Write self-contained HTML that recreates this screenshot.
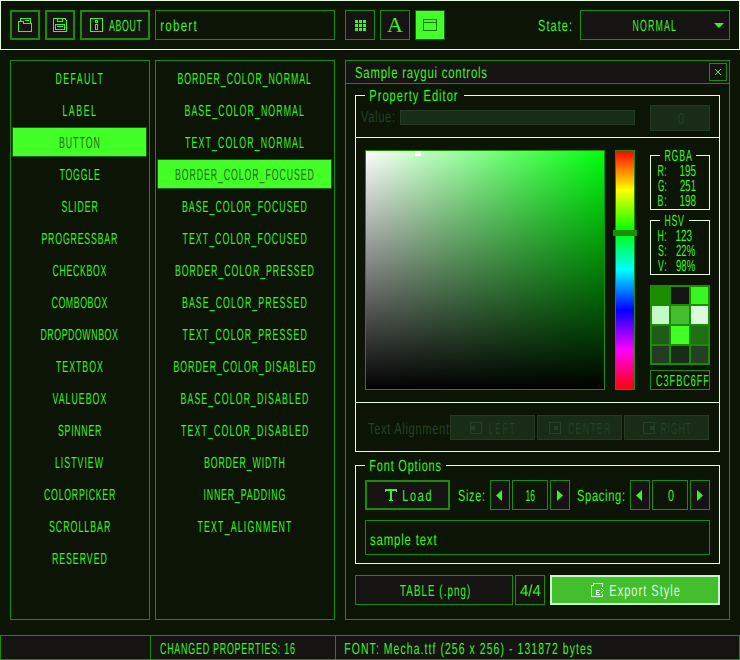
<!DOCTYPE html>
<html><head><meta charset="utf-8"><title>raygui style editor</title>
<style>
html,body{margin:0;padding:0;background:#0c1505;width:740px;height:660px;overflow:hidden;}
.r{position:absolute;box-sizing:border-box;}
.t{position:absolute;font:16px/16px "Liberation Sans",sans-serif;white-space:nowrap;transform-origin:0 0;}
</style></head><body>
<div class="r" style="left:0px;top:0px;width:740px;height:50px;background:#0c1505;border:1px solid #e6fce3;"></div>
<div class="r" style="left:10px;top:10px;width:30px;height:30px;background:#161313;border:2px solid #1c8d00;"></div>
<div class="r" style="left:45px;top:10px;width:30px;height:30px;background:#161313;border:2px solid #1c8d00;"></div>
<div class="r" style="left:80px;top:10px;width:70px;height:30px;background:#161313;border:2px solid #1c8d00;"></div>
<div class="r" style="left:155px;top:10px;width:180px;height:30px;background:#0c1505;border:1px solid #1c8d00;"></div>
<div class="r" style="left:345px;top:10px;width:30px;height:30px;background:#161313;border:1px solid #1c8d00;"></div>
<div class="r" style="left:380px;top:10px;width:30px;height:30px;background:#161313;border:1px solid #1c8d00;"></div>
<div class="r" style="left:415px;top:10px;width:30px;height:30px;background:#43ff28;border:1px solid #1f5b19;"></div>
<div class="r" style="left:580px;top:10px;width:150px;height:30px;background:#161313;border:1px solid #1c8d00;"></div>
<div class="r" style="left:18px;top:21px;width:1px;height:11px;background:#38f620;"></div>
<div class="r" style="left:18px;top:31px;width:14px;height:1px;background:#38f620;"></div>
<div class="r" style="left:31px;top:23px;width:1px;height:9px;background:#38f620;"></div>
<div class="r" style="left:18px;top:21px;width:6px;height:1px;background:#38f620;"></div>
<div class="r" style="left:23px;top:21px;width:1px;height:3px;background:#38f620;"></div>
<div class="r" style="left:23px;top:23px;width:9px;height:1px;background:#38f620;"></div>
<div class="r" style="left:20px;top:18px;width:1px;height:4px;background:#38f620;"></div>
<div class="r" style="left:20px;top:18px;width:11px;height:1px;background:#38f620;"></div>
<div class="r" style="left:30px;top:18px;width:1px;height:6px;background:#38f620;"></div>
<div class="r" style="left:25px;top:20px;width:4px;height:1px;background:#38f620;"></div>
<div class="r" style="left:53px;top:18px;width:1px;height:14px;background:#38f620;"></div>
<div class="r" style="left:53px;top:31px;width:14px;height:1px;background:#38f620;"></div>
<div class="r" style="left:66px;top:20px;width:1px;height:12px;background:#38f620;"></div>
<div class="r" style="left:53px;top:18px;width:13px;height:1px;background:#38f620;"></div>
<div class="r" style="left:65px;top:19px;width:1px;height:1px;background:#38f620;"></div>
<div class="r" style="left:57px;top:18px;width:1px;height:4px;background:#38f620;"></div>
<div class="r" style="left:62px;top:18px;width:1px;height:4px;background:#38f620;"></div>
<div class="r" style="left:57px;top:21px;width:6px;height:1px;background:#38f620;"></div>
<div class="r" style="left:55px;top:24px;width:10px;height:1px;background:#38f620;"></div>
<div class="r" style="left:55px;top:29px;width:10px;height:1px;background:#38f620;"></div>
<div class="r" style="left:55px;top:24px;width:1px;height:6px;background:#38f620;"></div>
<div class="r" style="left:64px;top:24px;width:1px;height:6px;background:#38f620;"></div>
<div class="r" style="left:57px;top:26px;width:6px;height:1px;background:#38f620;"></div>
<div class="r" style="left:90px;top:18px;width:13px;height:1px;background:#38f620;"></div>
<div class="r" style="left:90px;top:31px;width:13px;height:1px;background:#38f620;"></div>
<div class="r" style="left:90px;top:18px;width:1px;height:14px;background:#38f620;"></div>
<div class="r" style="left:102px;top:18px;width:1px;height:14px;background:#38f620;"></div>
<div class="r" style="left:95px;top:20px;width:3px;height:1px;background:#38f620;"></div>
<div class="r" style="left:95px;top:22px;width:3px;height:1px;background:#38f620;"></div>
<div class="r" style="left:95px;top:20px;width:1px;height:3px;background:#38f620;"></div>
<div class="r" style="left:97px;top:20px;width:1px;height:3px;background:#38f620;"></div>
<div class="r" style="left:95px;top:24px;width:3px;height:1px;background:#38f620;"></div>
<div class="r" style="left:95px;top:29px;width:3px;height:1px;background:#38f620;"></div>
<div class="r" style="left:95px;top:24px;width:1px;height:6px;background:#38f620;"></div>
<div class="r" style="left:97px;top:24px;width:1px;height:6px;background:#38f620;"></div>
<div class="r" style="left:355px;top:20px;width:3px;height:3px;background:#38f620;"></div>
<div class="r" style="left:355px;top:24px;width:3px;height:3px;background:#38f620;"></div>
<div class="r" style="left:355px;top:28px;width:3px;height:3px;background:#38f620;"></div>
<div class="r" style="left:359px;top:20px;width:3px;height:3px;background:#38f620;"></div>
<div class="r" style="left:359px;top:24px;width:3px;height:3px;background:#38f620;"></div>
<div class="r" style="left:359px;top:28px;width:3px;height:3px;background:#38f620;"></div>
<div class="r" style="left:363px;top:20px;width:3px;height:3px;background:#38f620;"></div>
<div class="r" style="left:363px;top:24px;width:3px;height:3px;background:#38f620;"></div>
<div class="r" style="left:363px;top:28px;width:3px;height:3px;background:#38f620;"></div>
<div class="r" style="left:423px;top:19px;width:14px;height:1px;background:#1e6f15;"></div>
<div class="r" style="left:423px;top:30px;width:14px;height:1px;background:#1e6f15;"></div>
<div class="r" style="left:423px;top:19px;width:1px;height:12px;background:#1e6f15;"></div>
<div class="r" style="left:436px;top:19px;width:1px;height:12px;background:#1e6f15;"></div>
<div class="r" style="left:423px;top:22px;width:14px;height:1px;background:#1e6f15;"></div>
<div class="r" style="left:387px;top:15px;font:20px/20px 'Liberation Serif',serif;color:#38f620;transform:scaleX(1.1);transform-origin:0 0">A</div>
<div class="r" style="left:10px;top:60px;width:140px;height:560px;background:#0c1505;border:1px solid #1c8d00;"></div>
<div class="r" style="left:155px;top:60px;width:180px;height:560px;background:#0c1505;border:1px solid #1c8d00;"></div>
<div class="r" style="left:12px;top:127px;width:135px;height:30px;background:#43ff28;border:1px solid #1f5b19;"></div>
<div class="r" style="left:157px;top:159px;width:175px;height:30px;background:#43ff28;border:1px solid #1f5b19;"></div>
<div class="r" style="left:345px;top:60px;width:385px;height:560px;background:#0c1505;border:1px solid #1c8d00;"></div>
<div class="r" style="left:345px;top:60px;width:385px;height:24px;background:#161313;border:1px solid #1c8d00;"></div>
<div class="r" style="left:709px;top:63px;width:18px;height:18px;background:#161313;border:1px solid #1c8d00;"></div>
<div class="r" style="left:715px;top:69px;width:1px;height:1px;background:#38f620;"></div>
<div class="r" style="left:716px;top:70px;width:1px;height:1px;background:#38f620;"></div>
<div class="r" style="left:717px;top:71px;width:2px;height:2px;background:#38f620;"></div>
<div class="r" style="left:719px;top:73px;width:1px;height:1px;background:#38f620;"></div>
<div class="r" style="left:720px;top:74px;width:1px;height:1px;background:#38f620;"></div>
<div class="r" style="left:720px;top:69px;width:1px;height:1px;background:#38f620;"></div>
<div class="r" style="left:719px;top:70px;width:1px;height:1px;background:#38f620;"></div>
<div class="r" style="left:716px;top:73px;width:1px;height:1px;background:#38f620;"></div>
<div class="r" style="left:715px;top:74px;width:1px;height:1px;background:#38f620;"></div>
<div class="r" style="left:355px;top:95px;width:1px;height:357px;background:#e6fce3;"></div>
<div class="r" style="left:719px;top:95px;width:1px;height:357px;background:#e6fce3;"></div>
<div class="r" style="left:355px;top:451px;width:365px;height:1px;background:#e6fce3;"></div>
<div class="r" style="left:355px;top:95px;width:10px;height:1px;background:#e6fce3;"></div>
<div class="r" style="left:464px;top:95px;width:256px;height:1px;background:#e6fce3;"></div>
<div class="r" style="left:400px;top:110px;width:235px;height:15px;background:#182c18;border:1px solid #223b22;"></div>
<div class="r" style="left:650px;top:105px;width:60px;height:26px;background:#182c18;border:1px solid #223b22;"></div>
<div class="r" style="left:355px;top:137px;width:365px;height:1px;background:#e6fce3;"></div>
<div class="r" style="left:365px;top:150px;width:240px;height:240px;background:linear-gradient(to bottom,rgba(0,0,0,0),#000),linear-gradient(to right,#fff,#00ff0c);"></div>
<div class="r" style="left:415px;top:151px;width:6px;height:5px;background:#ffffff;"></div>
<div class="r" style="left:365px;top:150px;width:240px;height:240px;border:1px solid #1c8d00;"></div>
<div class="r" style="left:615px;top:150px;width:20px;height:240px;background:linear-gradient(#f00,#ff0 16.667%,#0f0 33.333%,#0ff 50%,#00f 66.667%,#f0f 83.333%,#f00);"></div>
<div class="r" style="left:615px;top:150px;width:20px;height:240px;border:1px solid #1c8d00;"></div>
<div class="r" style="left:613px;top:230px;width:24px;height:6px;background:#1c8d00;"></div>
<div class="r" style="left:650px;top:155px;width:1px;height:55px;background:#e6fce3;"></div>
<div class="r" style="left:709px;top:155px;width:1px;height:55px;background:#e6fce3;"></div>
<div class="r" style="left:650px;top:209px;width:60px;height:1px;background:#e6fce3;"></div>
<div class="r" style="left:650px;top:155px;width:10px;height:1px;background:#e6fce3;"></div>
<div class="r" style="left:696px;top:155px;width:14px;height:1px;background:#e6fce3;"></div>
<div class="r" style="left:650px;top:220px;width:1px;height:55px;background:#e6fce3;"></div>
<div class="r" style="left:709px;top:220px;width:1px;height:55px;background:#e6fce3;"></div>
<div class="r" style="left:650px;top:274px;width:60px;height:1px;background:#e6fce3;"></div>
<div class="r" style="left:650px;top:220px;width:10px;height:1px;background:#e6fce3;"></div>
<div class="r" style="left:689px;top:220px;width:21px;height:1px;background:#e6fce3;"></div>
<div class="r" style="left:650px;top:285px;width:60px;height:80px;background:#1c8d00;"></div>
<div class="r" style="left:652px;top:287px;width:17px;height:17px;background:#1c8d00;"></div>
<div class="r" style="left:671px;top:287px;width:18px;height:17px;background:#161313;"></div>
<div class="r" style="left:691px;top:287px;width:17px;height:17px;background:#38f620;"></div>
<div class="r" style="left:652px;top:306px;width:17px;height:18px;background:#c3fbc6;"></div>
<div class="r" style="left:671px;top:306px;width:18px;height:18px;background:#43bf2e;"></div>
<div class="r" style="left:691px;top:306px;width:17px;height:18px;background:#dcfadc;"></div>
<div class="r" style="left:652px;top:326px;width:17px;height:18px;background:#1f5b19;"></div>
<div class="r" style="left:671px;top:326px;width:18px;height:18px;background:#43ff28;"></div>
<div class="r" style="left:691px;top:326px;width:17px;height:18px;background:#1e6f15;"></div>
<div class="r" style="left:652px;top:346px;width:17px;height:17px;background:#223b22;"></div>
<div class="r" style="left:671px;top:346px;width:18px;height:17px;background:#182c18;"></div>
<div class="r" style="left:691px;top:346px;width:17px;height:17px;background:#244125;"></div>
<div class="r" style="left:650px;top:370px;width:60px;height:20px;background:#0c1505;border:1px solid #1c8d00;"></div>
<div class="r" style="left:355px;top:402px;width:365px;height:1px;background:#e6fce3;"></div>
<div class="r" style="left:450px;top:415px;width:85px;height:25px;background:#182c18;border:1px solid #223b22;"></div>
<div class="r" style="left:537px;top:415px;width:85px;height:25px;background:#182c18;border:1px solid #223b22;"></div>
<div class="r" style="left:624px;top:415px;width:85px;height:25px;background:#182c18;border:1px solid #223b22;"></div>
<div class="r" style="left:470px;top:422px;width:12px;height:1px;background:#244125;"></div>
<div class="r" style="left:470px;top:433px;width:12px;height:1px;background:#244125;"></div>
<div class="r" style="left:470px;top:422px;width:1px;height:12px;background:#244125;"></div>
<div class="r" style="left:481px;top:422px;width:1px;height:12px;background:#244125;"></div>
<div class="r" style="left:471px;top:426px;width:4px;height:4px;background:#244125;"></div>
<div class="r" style="left:549px;top:422px;width:12px;height:1px;background:#244125;"></div>
<div class="r" style="left:549px;top:433px;width:12px;height:1px;background:#244125;"></div>
<div class="r" style="left:549px;top:422px;width:1px;height:12px;background:#244125;"></div>
<div class="r" style="left:560px;top:422px;width:1px;height:12px;background:#244125;"></div>
<div class="r" style="left:554px;top:426px;width:4px;height:4px;background:#244125;"></div>
<div class="r" style="left:643px;top:422px;width:12px;height:1px;background:#244125;"></div>
<div class="r" style="left:643px;top:433px;width:12px;height:1px;background:#244125;"></div>
<div class="r" style="left:643px;top:422px;width:1px;height:12px;background:#244125;"></div>
<div class="r" style="left:654px;top:422px;width:1px;height:12px;background:#244125;"></div>
<div class="r" style="left:650px;top:426px;width:4px;height:4px;background:#244125;"></div>
<div class="r" style="left:355px;top:465px;width:1px;height:99px;background:#e6fce3;"></div>
<div class="r" style="left:719px;top:465px;width:1px;height:99px;background:#e6fce3;"></div>
<div class="r" style="left:355px;top:563px;width:365px;height:1px;background:#e6fce3;"></div>
<div class="r" style="left:355px;top:465px;width:10px;height:1px;background:#e6fce3;"></div>
<div class="r" style="left:446px;top:465px;width:274px;height:1px;background:#e6fce3;"></div>
<div class="r" style="left:365px;top:480px;width:85px;height:30px;background:#161313;border:2px solid #1c8d00;"></div>
<div class="r" style="left:385px;top:489px;width:12px;height:2px;background:#38f620;"></div>
<div class="r" style="left:385px;top:489px;width:1px;height:3px;background:#38f620;"></div>
<div class="r" style="left:396px;top:489px;width:1px;height:3px;background:#38f620;"></div>
<div class="r" style="left:390px;top:489px;width:2px;height:12px;background:#38f620;"></div>
<div class="r" style="left:389px;top:500px;width:4px;height:1px;background:#38f620;"></div>
<div class="r" style="left:490px;top:480px;width:20px;height:30px;background:#161313;border:1px solid #1c8d00;"></div>
<div class="r" style="left:512px;top:480px;width:36px;height:30px;background:#0c1505;border:1px solid #1c8d00;"></div>
<div class="r" style="left:550px;top:480px;width:20px;height:30px;background:#161313;border:1px solid #1c8d00;"></div>
<div class="r" style="left:630px;top:480px;width:20px;height:30px;background:#161313;border:1px solid #1c8d00;"></div>
<div class="r" style="left:652px;top:480px;width:36px;height:30px;background:#0c1505;border:1px solid #1c8d00;"></div>
<div class="r" style="left:690px;top:480px;width:20px;height:30px;background:#161313;border:1px solid #1c8d00;"></div>
<svg class="r" style="left:0;top:0" width="740" height="660"><polygon points="714,23 724,23 719,28" fill="#38f620"/><polygon points="502,490 502,501 496,495.5" fill="#38f620"/><polygon points="557,490 557,501 563,495.5" fill="#38f620"/><polygon points="642,490 642,501 636,495.5" fill="#38f620"/><polygon points="697,490 697,501 703,495.5" fill="#38f620"/></svg>
<div class="r" style="left:365px;top:520px;width:345px;height:35px;background:#0c1505;border:1px solid #1c8d00;"></div>
<div class="r" style="left:355px;top:575px;width:158px;height:30px;background:#161313;border:1px solid #1c8d00;"></div>
<div class="r" style="left:515px;top:575px;width:30px;height:30px;background:#161313;border:1px solid #1c8d00;"></div>
<div class="r" style="left:550px;top:575px;width:170px;height:30px;background:#43bf2e;border:2px solid #c3fbc6;"></div>
<div class="r" style="left:593px;top:583px;width:10px;height:1px;background:#dcfadc;"></div>
<div class="r" style="left:593px;top:583px;width:1px;height:3px;background:#dcfadc;"></div>
<div class="r" style="left:591px;top:585px;width:3px;height:1px;background:#dcfadc;"></div>
<div class="r" style="left:591px;top:585px;width:1px;height:12px;background:#dcfadc;"></div>
<div class="r" style="left:591px;top:596px;width:12px;height:1px;background:#dcfadc;"></div>
<div class="r" style="left:602px;top:583px;width:1px;height:4px;background:#dcfadc;"></div>
<div class="r" style="left:602px;top:594px;width:1px;height:3px;background:#dcfadc;"></div>
<div class="r" style="left:596px;top:590px;width:1px;height:5px;background:#dcfadc;"></div>
<div class="r" style="left:596px;top:590px;width:4px;height:1px;background:#dcfadc;"></div>
<div class="r" style="left:596px;top:592px;width:3px;height:1px;background:#dcfadc;"></div>
<div class="r" style="left:596px;top:594px;width:4px;height:1px;background:#dcfadc;"></div>
<div class="r" style="left:601px;top:588px;width:1px;height:1px;background:#dcfadc;"></div>
<div class="r" style="left:602px;top:589px;width:1px;height:1px;background:#dcfadc;"></div>
<div class="r" style="left:603px;top:590px;width:1px;height:1px;background:#dcfadc;"></div>
<div class="r" style="left:602px;top:591px;width:1px;height:1px;background:#dcfadc;"></div>
<div class="r" style="left:601px;top:592px;width:1px;height:1px;background:#dcfadc;"></div>
<div class="r" style="left:0px;top:635px;width:740px;height:25px;background:#161313;border:1px solid #1c8d00;"></div>
<div class="r" style="left:150px;top:635px;width:1px;height:25px;background:#1c8d00;"></div>
<div class="r" style="left:335px;top:635px;width:1px;height:25px;background:#1c8d00;"></div>
<svg class="r" style="left:0;top:0" width="740" height="660" font-family="Liberation Sans, sans-serif" font-size="16" text-rendering="geometricPrecision">
<text transform="translate(109.00,31) scale(0.5500,1)" fill="#38f620" letter-spacing="1.164">ABOUT</text>
<text transform="translate(160.28,31) scale(0.7200,1)" fill="#38f620" letter-spacing="1.730">robert</text>
<text transform="translate(538.00,31) scale(0.6860,1)" fill="#38f620" letter-spacing="1.549">State:</text>
<text transform="translate(632.45,31) scale(0.5500,1)" fill="#38f620" letter-spacing="2.125">NORMAL</text>
<text transform="translate(55.45,84) scale(0.5500,1)" fill="#38f620" letter-spacing="2.567">DEFAULT</text>
<text transform="translate(62.45,116) scale(0.5500,1)" fill="#38f620" letter-spacing="2.771">LABEL</text>
<text transform="translate(58.95,148) scale(0.5500,1)" fill="#1e6f15" letter-spacing="1.760">BUTTON</text>
<text transform="translate(59.50,180) scale(0.5500,1)" fill="#38f620" letter-spacing="1.402">TOGGLE</text>
<text transform="translate(61.50,212) scale(0.5500,1)" fill="#38f620" letter-spacing="1.642">SLIDER</text>
<text transform="translate(41.45,244) scale(0.5500,1)" fill="#38f620" letter-spacing="1.433">PROGRESSBAR</text>
<text transform="translate(52.50,276) scale(0.5500,1)" fill="#38f620" letter-spacing="1.151">CHECKBOX</text>
<text transform="translate(51.50,308) scale(0.5500,1)" fill="#38f620" letter-spacing="1.037">COMBOBOX</text>
<text transform="translate(40.45,340) scale(0.5500,1)" fill="#38f620" letter-spacing="1.000">DROPDOWNBOX</text>
<text transform="translate(56.00,372) scale(0.5500,1)" fill="#38f620" letter-spacing="1.741">TEXTBOX</text>
<text transform="translate(52.50,404) scale(0.5500,1)" fill="#38f620" letter-spacing="1.826">VALUEBOX</text>
<text transform="translate(58.00,436) scale(0.5500,1)" fill="#38f620" letter-spacing="1.269">SPINNER</text>
<text transform="translate(54.95,468) scale(0.5500,1)" fill="#38f620" letter-spacing="1.814">LISTVIEW</text>
<text transform="translate(44.00,500) scale(0.5500,1)" fill="#38f620" letter-spacing="1.318">COLORPICKER</text>
<text transform="translate(49.00,532) scale(0.5500,1)" fill="#38f620" letter-spacing="1.818">SCROLLBAR</text>
<text transform="translate(51.95,564) scale(0.5500,1)" fill="#38f620" letter-spacing="1.715">RESERVED</text>
<text transform="translate(177.45,84) scale(0.5500,1)" fill="#38f620" letter-spacing="1.729">BORDER_COLOR_NORMAL</text>
<text transform="translate(184.45,116) scale(0.5500,1)" fill="#38f620" letter-spacing="1.964">BASE_COLOR_NORMAL</text>
<text transform="translate(185.00,148) scale(0.5500,1)" fill="#38f620" letter-spacing="2.014">TEXT_COLOR_NORMAL</text>
<text transform="translate(174.95,180) scale(0.5500,1)" fill="#1e6f15" letter-spacing="1.636">BORDER_COLOR_FOCUSED</text>
<text transform="translate(181.95,212) scale(0.5500,1)" fill="#38f620" letter-spacing="1.847">BASE_COLOR_FOCUSED</text>
<text transform="translate(182.50,244) scale(0.5500,1)" fill="#38f620" letter-spacing="1.894">TEXT_COLOR_FOCUSED</text>
<text transform="translate(174.95,276) scale(0.5500,1)" fill="#38f620" letter-spacing="1.729">BORDER_COLOR_PRESSED</text>
<text transform="translate(181.95,308) scale(0.5500,1)" fill="#38f620" letter-spacing="1.950">BASE_COLOR_PRESSED</text>
<text transform="translate(182.50,340) scale(0.5500,1)" fill="#38f620" letter-spacing="1.997">TEXT_COLOR_PRESSED</text>
<text transform="translate(173.45,372) scale(0.5500,1)" fill="#38f620" letter-spacing="1.781">BORDER_COLOR_DISABLED</text>
<text transform="translate(180.45,404) scale(0.5500,1)" fill="#38f620" letter-spacing="1.997">BASE_COLOR_DISABLED</text>
<text transform="translate(181.00,436) scale(0.5500,1)" fill="#38f620" letter-spacing="2.041">TEXT_COLOR_DISABLED</text>
<text transform="translate(203.95,468) scale(0.5500,1)" fill="#38f620" letter-spacing="1.566">BORDER_WIDTH</text>
<text transform="translate(203.45,500) scale(0.5500,1)" fill="#38f620" letter-spacing="1.527">INNER_PADDING</text>
<text transform="translate(197.50,532) scale(0.5500,1)" fill="#38f620" letter-spacing="2.119">TEXT_ALIGNMENT</text>
<text transform="translate(355.00,78) scale(0.7115,1)" fill="#38f620" letter-spacing="1.085">Sample raygui controls</text>
<text transform="translate(369.30,101) scale(0.6957,1)" fill="#38f620" letter-spacing="1.436">Property Editor</text>
<text transform="translate(361.00,122) scale(0.6860,1)" fill="#244125" letter-spacing="1.074">Value:</text>
<text transform="translate(678.00,124) scale(0.6667,1)" fill="#244125">0</text>
<text transform="translate(664.45,161) scale(0.5500,1)" fill="#38f620" letter-spacing="1.473">RGBA</text>
<text transform="translate(657.45,176) scale(0.5500,1)" fill="#38f620" letter-spacing="0.991">R:</text>
<text transform="translate(679.38,176) scale(0.6200,1)" fill="#38f620" letter-spacing="0.005">195</text>
<text transform="translate(658.00,191) scale(0.5180,1)" fill="#38f620">G:</text>
<text transform="translate(680.00,191) scale(0.5971,1)" fill="#38f620">251</text>
<text transform="translate(657.45,206) scale(0.5500,1)" fill="#38f620" letter-spacing="1.874">B:</text>
<text transform="translate(679.38,206) scale(0.6200,1)" fill="#38f620" letter-spacing="0.005">198</text>
<text transform="translate(664.45,226) scale(0.5500,1)" fill="#38f620" letter-spacing="1.159">HSV</text>
<text transform="translate(657.45,241) scale(0.5500,1)" fill="#38f620" letter-spacing="0.991">H:</text>
<text transform="translate(675.38,241) scale(0.6200,1)" fill="#38f620" letter-spacing="0.005">123</text>
<text transform="translate(658.00,256) scale(0.5500,1)" fill="#38f620" letter-spacing="0.874">S:</text>
<text transform="translate(676.00,256) scale(0.5975,1)" fill="#38f620">22%</text>
<text transform="translate(658.00,271) scale(0.5500,1)" fill="#38f620" letter-spacing="1.467">V:</text>
<text transform="translate(676.00,271) scale(0.5975,1)" fill="#38f620">98%</text>
<text transform="translate(656.00,386) scale(0.5675,1)" fill="#38f620" letter-spacing="1.752">C3FBC6FF</text>
<text transform="translate(368.00,434) scale(0.6938,1)" fill="#244125" letter-spacing="0.976">Text Alignment</text>
<text transform="translate(488.45,434) scale(0.5500,1)" fill="#244125" letter-spacing="2.976">LEFT</text>
<text transform="translate(568.00,434) scale(0.5500,1)" fill="#244125" letter-spacing="2.227">CENTER</text>
<text transform="translate(660.45,434) scale(0.5500,1)" fill="#244125" letter-spacing="1.386">RIGHT</text>
<text transform="translate(369.31,471) scale(0.6891,1)" fill="#38f620" letter-spacing="1.130">Font Options</text>
<text transform="translate(402.32,501) scale(0.6775,1)" fill="#38f620" letter-spacing="2.544">Load</text>
<text transform="translate(458.00,501) scale(0.6775,1)" fill="#38f620" letter-spacing="1.063">Size:</text>
<text transform="translate(525.47,501) scale(0.5326,1)" fill="#38f620">16</text>
<text transform="translate(577.00,501) scale(0.6957,1)" fill="#38f620" letter-spacing="0.962">Spacing:</text>
<text transform="translate(668.00,501) scale(0.6667,1)" fill="#38f620">0</text>
<text transform="translate(370.00,545) scale(0.7200,1)" fill="#38f620" letter-spacing="1.069">sample text</text>
<text transform="translate(400.00,596) scale(0.6138,1)" fill="#38f620" letter-spacing="1.694">TABLE (.png)</text>
<text transform="translate(520.00,596) scale(0.9399,1)" fill="#38f620">4/4</text>
<text transform="translate(609.31,596) scale(0.6891,1)" fill="#dcfadc" letter-spacing="1.475">Export Style</text>
<text transform="translate(160.00,654) scale(0.5574,1)" fill="#38f620" letter-spacing="1.339">CHANGED PROPERTIES: 16</text>
<text transform="translate(344.35,654) scale(0.6517,1)" fill="#38f620" letter-spacing="1.656">FONT: Mecha.ttf (256 x 256) - 131872 bytes</text>
</svg>
</body></html>
